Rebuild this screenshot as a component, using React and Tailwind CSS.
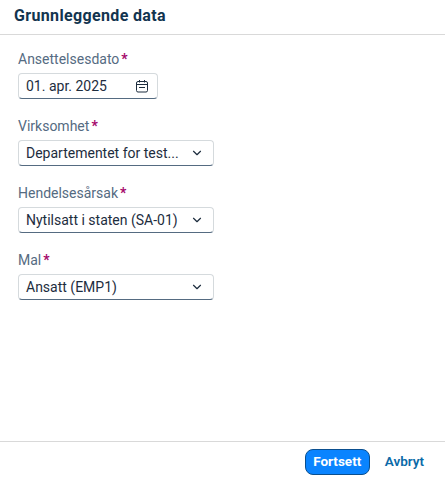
import { ChevronDown } from "lucide-react";

const fields = [
  { label: "Virksomhet", value: "Departementet for test..." },
  { label: "Hendelsesårsak", value: "Nytilsatt i staten (SA-01)" },
  { label: "Mal", value: "Ansatt (EMP1)" },
];

function FieldLabel({ children }) {
  return (
    <div className="h-[18px] text-[14px] leading-[18px] text-[#556b82]">
      {children}
      <span className="ml-[2px] font-bold text-[#a5076b]">*</span>
    </div>
  );
}

function CalendarIcon() {
  return (
    <svg width="14" height="14" viewBox="0 0 14 14" fill="none" stroke="#1d2d3e" strokeWidth="1">
      <rect x="1.5" y="2.5" width="11" height="10.5" rx="1.5" />
      <path d="M1.5 5.5h11M4.5 1v2.5M9.5 1v2.5M4 8.5h6" />
    </svg>
  );
}

export default function App() {
  return (
    <div className="flex h-[481px] w-[445px] flex-col bg-white font-['Roboto',sans-serif] text-[#1d2d3e]">
      <div className="flex h-[35px] shrink-0 items-center border-b border-[#d9d9d9] px-[14px] pb-[2px] text-[16px] font-bold tracking-[0.35px] text-[#12344f]">
        Grunnleggende data
      </div>

      <div className="flex flex-1 flex-col gap-[18px] px-[18px] pt-[15px]">
        <div>
          <FieldLabel>Ansettelsesdato</FieldLabel>
          <div className="mt-[5px] flex h-[26px] w-[140px] items-center justify-between rounded-[4px] border border-[#d5dadd] border-b-[#556b81] pl-[7px] pr-[8px] text-[14px]">
            <span>01. apr. 2025</span>
            <CalendarIcon />
          </div>
        </div>

        {fields.map((f) => (
          <div key={f.label}>
            <FieldLabel>{f.label}</FieldLabel>
            <div className="mt-[5px] flex h-[26px] w-[196px] items-center justify-between rounded-[4px] border border-[#d5dadd] border-b-[#556b81] pl-[7px] pr-[9px] text-[14px]">
              <span className="whitespace-nowrap">{f.value}</span>
              <ChevronDown size={14} strokeWidth={2} className="shrink-0" />
            </div>
          </div>
        ))}
      </div>

      <div className="flex h-[40px] shrink-0 items-center justify-end gap-[15px] border-t border-[#d9d9d9] pr-[21px]">
        <button className="h-[26px] w-[65px] rounded-[8px] border border-[#0a4f8f] bg-[#0a84ff] text-[13.5px] font-bold text-white">
          Fortsett
        </button>
        <button className="h-[26px] text-[13.5px] font-semibold text-[#0b6aa8]">
          Avbryt
        </button>
      </div>
    </div>
  );
}
